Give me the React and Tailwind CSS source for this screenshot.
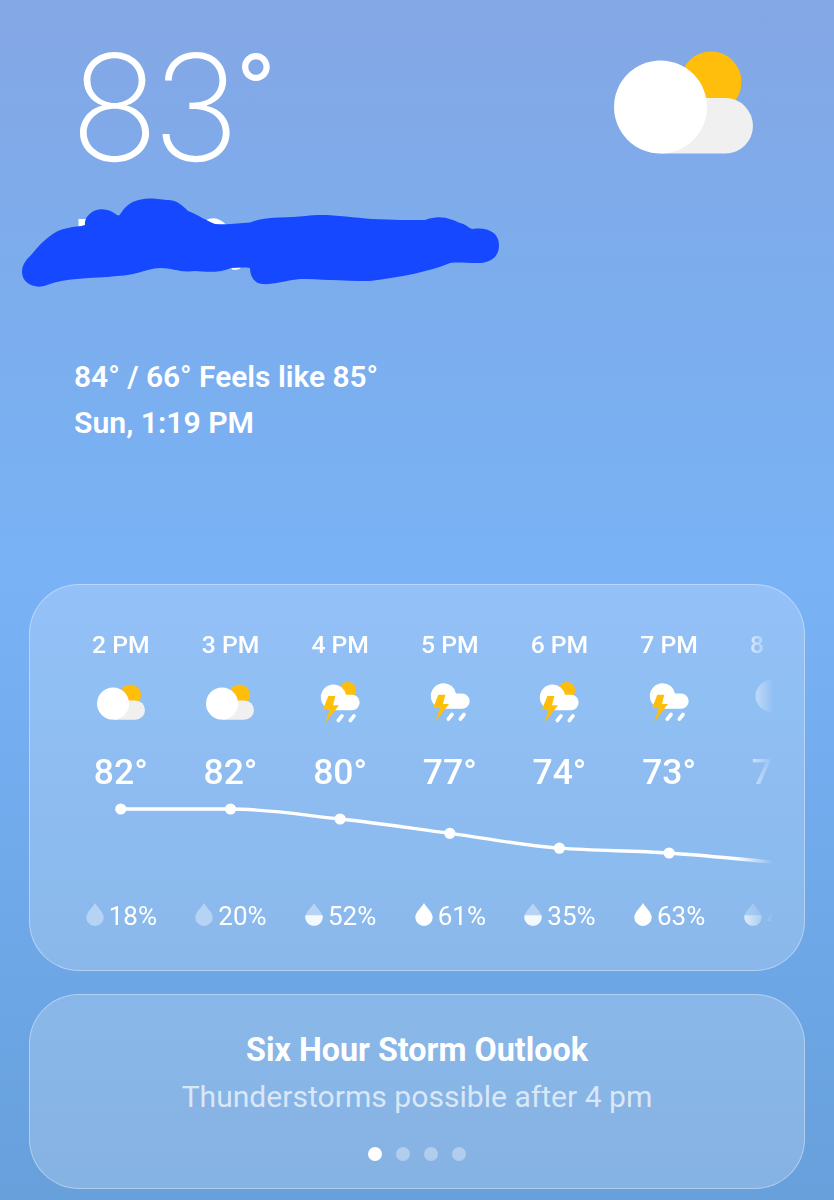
import clsx from 'clsx';

const hours = [
  { time: '2 PM', icon: 'cloudy', temp: '82°', chance: '18%', drop: 'empty' },
  { time: '3 PM', icon: 'cloudy', temp: '82°', chance: '20%', drop: 'empty' },
  { time: '4 PM', icon: 'stormSun', temp: '80°', chance: '52%', drop: 'half' },
  { time: '5 PM', icon: 'storm', temp: '77°', chance: '61%', drop: 'full' },
  { time: '6 PM', icon: 'stormSun', temp: '74°', chance: '35%', drop: 'half' },
  { time: '7 PM', icon: 'storm', temp: '73°', chance: '63%', drop: 'full' },
  { time: '8 PM', icon: 'night', temp: '72°', chance: '49%', drop: 'half' },
];

function PartlyCloudy({ className }) {
  return (
    <svg viewBox="0 0 139 103" className={className}>
      <circle cx="97" cy="31" r="30.5" fill="#ffbe0b" />
      <path d="M46.5 47H111.2a27.8 27.8 0 0 1 0 55.6H46.5z" fill="#f0f0f0" />
      <circle cx="46.5" cy="56" r="46.5" fill="#fff" />
    </svg>
  );
}

function Storm({ sun }) {
  return (
    <svg viewBox="0 0 144 132" className="w-12 h-11">
      {sun && <circle cx="95.5" cy="31" r="25" fill="#ffbe0b" />}
      <g transform={sun ? undefined : 'translate(0 -4)'}>
        <path
          d="M53 13.5a38 38 0 0 1 37 31H108a23 23 0 0 1 0 46H53a38.5 38.5 0 0 1 0-77z"
          fill="#fff"
        />
        <path d="M37 48H58L51 76H69L28 129L41 88H21z" fill="#ffbe0b" />
        <path
          d="M67 121.5L78 107.5M103 121.5L114 107.5"
          stroke="#fff"
          strokeWidth="11"
          strokeLinecap="round"
        />
      </g>
    </svg>
  );
}

function WeatherIcon({ type }) {
  if (type === 'cloudy') return <PartlyCloudy className="w-12 h-9 mt-1" />;
  if (type === 'night') {
    return (
      <svg viewBox="0 0 48 44" className="w-12 h-11">
        <circle cx="16.5" cy="16" r="16" fill="#f0f4fc" />
      </svg>
    );
  }
  return <Storm sun={type === 'stormSun'} />;
}

function Drop({ level }) {
  return (
    <svg viewBox="0 0 18 23" className="w-[18px] h-[23px] shrink-0">
      <path
        d="M9 0C11.5 4.5 17.7 9.5 17.7 14.2A8.7 8.7 0 0 1 .3 14.2C.3 9.5 6.5 4.5 9 0z"
        fill="#fff"
        fillOpacity={level === 'full' ? 1 : 0.38}
      />
      {level === 'half' && (
        <path d="M.5 12.3H17.5A8.7 8.7 0 1 1 .5 12.3z" fill="#fff" fillOpacity="0.85" />
      )}
    </svg>
  );
}

const points = [
  [54.8, 9],
  [164.5, 9],
  [274.1, 19],
  [383.8, 33.3],
  [493.4, 48.2],
  [603.1, 53],
];

function TempLine() {
  return (
    <svg viewBox="0 0 768 70" className="w-[768px] h-[70px] shrink-0">
      <path
        d="M54.8 9H164.5C203 9 236 15 274.1 19S347 28.5 383.8 33.3S456 45.5 493.4 48.2S566 50.5 603.1 53S676 59.5 713 62.5"
        fill="none"
        stroke="#fff"
        strokeWidth="3.3"
      />
      {points.map(([x, y]) => (
        <circle key={x} cx={x} cy={y} r="5.6" fill="#fff" />
      ))}
    </svg>
  );
}

// Marker stroke hiding the place name
function Scribble() {
  return (
    <svg viewBox="0 0 500 110" className="w-[500px] h-[110px]">
      <path
        d="M78.5 29H88V37H78.5zM206 30Q216 25 225.5 34V36H208zM231 76H241.5Q240 81 232 79.5zM449 29Q456 31 459 33L452 34z"
        fill="#fff"
      />
      <path
        d="M22 82C22 74 27 69 32 64C41 53 53 40 68 38C74 36 80 37 85 35C84 29 89 23 95 20.5C103 17.500 111 20 117 25C119 26 120 25 121 23C128 12 137 9 150 8.500C158 8.500 163 10 169 10C178 11 182 15 188 21C198 25 207 31 215 34C230 35 239 33 250 32.500C266 26 288 28 306 26C325 23 348 27 372 29C392 30 412 30 425 30C440 24 452 29 460 33C468 35 469 39 473 39C488 37 499 43 499 55C499 68 489 74 475 73C466 73 458 72 450 73C429 82 400 87 370 91C340 91 319 89 300 89C282 91 273 95 262 94C254 93 250 86 250 78C243 77 237 78 231 78C221 83 206 82 195 81C180 83 173 78 160 78C145 79 138 85 117 86C91 89 67 87 47 95C35 100 22 93 22 82z"
        fill="#1548ff"
      />
    </svg>
  );
}

function Card({ className, children }) {
  return (
    <section className={clsx('mx-[29px] rounded-[50px] border border-white/35 bg-white/20', className)}>
      {children}
    </section>
  );
}

export default function App() {
  return (
    <main className="w-[834px] h-[1200px] overflow-hidden text-white font-['Roboto',sans-serif] bg-[linear-gradient(#84a7e5_0px,#7aaff0_400px,#79b3f6_580px,#70aaeb_860px,#67a0db_1200px)]">
      <header className="relative flex h-[584px] flex-col pl-[74px]">
        <div className="flex h-[199px] justify-between pr-[81px]">
          <div className="-ml-[4px] flex pt-[8px] font-['Inter',sans-serif] leading-[200px]">
            <span className="text-[147.5px] font-extralight tracking-[-7px]">83</span>
            <span className="ml-[4px] text-[84px] leading-[154px] font-normal">°</span>
          </div>
          <PartlyCloudy className="w-[139px] h-[103px] mt-[51px]" />
        </div>
        <div className="absolute left-0 top-[190px]">
          <Scribble />
        </div>
        <div className="mt-[155px] leading-[46px] font-semibold">
          <p className="text-[29.9px]">84° / 66° Feels like 85°</p>
          <p className="text-[30.2px]">Sun, 1:19 PM</p>
        </div>
      </header>

      <Card className="h-[387px] pl-9 pr-8">
        <div className="h-full overflow-hidden [mask-image:linear-gradient(to_right,#000_670px,transparent_708px)]">
          <div className="flex w-[768px] pt-[45px]">
            {hours.map((h) => (
              <div key={h.time} className="flex w-[109.66px] shrink-0 flex-col items-center">
                <div className="text-[24.7px] leading-[30px] font-medium">{h.time}</div>
                <div className="mt-5 h-11">
                  <WeatherIcon type={h.icon} />
                </div>
                <div className="mt-[26px] text-[35.5px] leading-[44px] font-medium">{h.temp}</div>
              </div>
            ))}
          </div>
          <div className="mt-[6px] flex">
            <TempLine />
          </div>
          <div className="mt-[33px] flex w-[768px]">
            {hours.map((h) => (
              <div key={h.time} className="flex w-[109.66px] shrink-0 justify-center gap-[5px] pl-px">
                <Drop level={h.drop} />
                <span className="text-[26px] leading-[26px]">{h.chance}</span>
              </div>
            ))}
          </div>
        </div>
      </Card>

      <Card className="mt-[23px] flex h-[195px] flex-col items-center pt-8">
        <h2 className="text-[32.3px] leading-[46px] font-bold">Six Hour Storm Outlook</h2>
        <p className="mt-px text-[30.1px] leading-[46px] text-white/70">Thunderstorms possible after 4 pm</p>
        <div className="mt-[27px] flex gap-[14px]">
          <span className="size-[14px] rounded-full bg-white" />
          <span className="size-[14px] rounded-full bg-white/35" />
          <span className="size-[14px] rounded-full bg-white/35" />
          <span className="size-[14px] rounded-full bg-white/35" />
        </div>
      </Card>
    </main>
  );
}
